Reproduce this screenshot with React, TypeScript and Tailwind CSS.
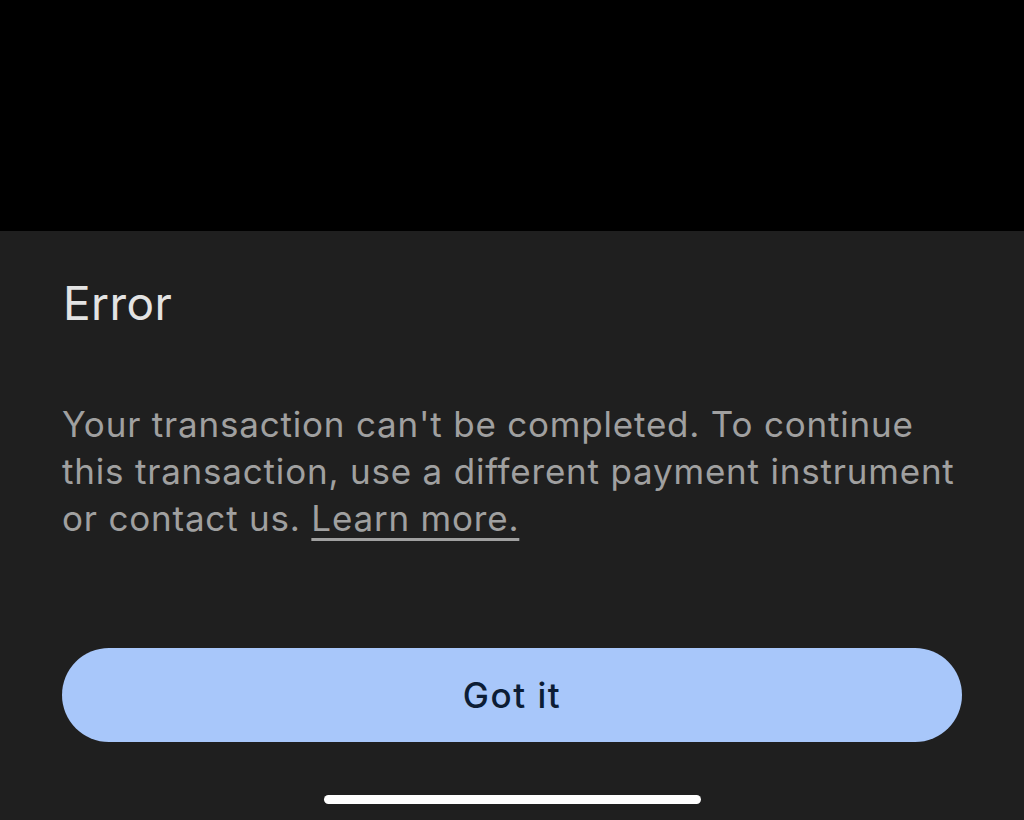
export default function App() {
  return (
    <div className="flex h-[820px] w-full flex-col bg-black" style={{ fontFamily: 'Inter, "Noto Sans", sans-serif' }}>
      <div className="h-[231px] shrink-0 bg-black" />
      <div className="flex flex-1 flex-col bg-[#1f1f1f] px-[62px]">
        <h1 className="mt-[44px] pl-[1px] text-[46px] leading-[56px] font-normal tracking-[0.4px] text-[#e3e3e3]">Error</h1>
        <p className="mt-[70px] text-[35px] leading-[47px] tracking-[0.8px] text-[#a0a0a0]">
          Your transaction can't be completed. To continue
          <br />
          this transaction, use a different payment instrument
          <br />
          or contact us.{' '}
          <a className="underline decoration-[2.5px] underline-offset-[7px]" href="#">
            Learn more.
          </a>
        </p>
        <button className="mt-[106px] flex h-[94px] w-full items-center justify-center rounded-full bg-[#a8c7fa] text-[35px] font-medium tracking-[1.5px] text-[#0c1d35]">
          Got it
        </button>
        <div className="mt-[53px] flex justify-center">
          <div className="h-[9px] w-[377px] rounded-full bg-white" />
        </div>
      </div>
    </div>
  );
}
